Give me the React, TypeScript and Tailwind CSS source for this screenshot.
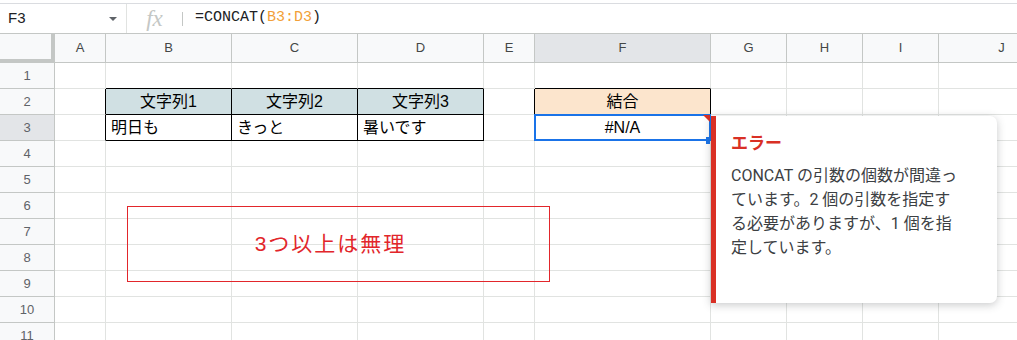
import React from 'react'

const COLS = [
    { id: 'A', w: 'w-[51px]' },
    { id: 'B', w: 'w-[126px]' },
    { id: 'C', w: 'w-[126px]' },
    { id: 'D', w: 'w-[126px]' },
    { id: 'E', w: 'w-[51px]' },
    { id: 'F', w: 'w-[176px]' },
    { id: 'G', w: 'w-[76px]' },
    { id: 'H', w: 'w-[76px]' },
    { id: 'I', w: 'w-[76px]' },
    { id: 'J', w: 'w-[126px]' },
]

const ROWS = [1, 2, 3, 4, 5, 6, 7, 8, 9, 10, 11]

// per-cell content and border overrides (table B2:D3 and F2:F3 have black borders)
const CELLS: Record<string, { text?: string; cls?: string }> = {
    A2: { cls: 'border-r-black' },
    A3: { cls: 'border-r-black' },
    B1: { cls: 'border-b-black' },
    C1: { cls: 'border-b-black' },
    D1: { cls: 'border-b-black' },
    F1: { cls: 'border-b-black' },
    E2: { cls: 'border-r-black' },
    E3: { cls: 'border-r-black' },
    B2: { text: '文字列1', cls: 'border-r-black border-b-black bg-[#d0e0e3] justify-center' },
    C2: { text: '文字列2', cls: 'border-r-black border-b-black bg-[#d0e0e3] justify-center' },
    D2: { text: '文字列3', cls: 'border-r-black border-b-black bg-[#d0e0e3] justify-center' },
    B3: { text: '明日も', cls: 'border-r-black border-b-black pl-[5px]' },
    C3: { text: 'きっと', cls: 'border-r-black border-b-black pl-[5px]' },
    D3: { text: '暑いです', cls: 'border-r-black border-b-black pl-[5px]' },
    F2: { text: '結合', cls: 'border-r-black border-b-black bg-[#fce5cd] justify-center' },
    F3: { text: '#N/A', cls: 'border-r-black border-b-black justify-center' },
}

function FormulaBar() {
    return (
        <div className="h-[30px] border-b border-[#c4c7c5] flex items-center">
            <div className="w-[127px] h-full flex items-center justify-between border-r border-[#e1e3e1] pl-[8px] pr-[9px]">
                <span className="text-[15px] text-[#202124]">F3</span>
                <span className="w-0 h-0 border-l-[4px] border-r-[4px] border-t-[4px] border-l-transparent border-r-transparent border-t-[#5f6368] mt-[1px]" />
            </div>
            <div className="w-[55px] flex justify-center">
                <span className="text-[23px] italic text-[#c4c7c5] leading-none" style={{ fontFamily: '"Liberation Serif", serif' }}>
                    fx
                </span>
            </div>
            <div className="w-px h-[14px] bg-[#c4c7c5]" />
            <div className="ml-[12px] text-[15px] text-[#202124]" style={{ fontFamily: '"Liberation Mono", monospace' }}>
                =CONCAT(<span className="text-[#f29f38]">B3:D3</span>)
            </div>
        </div>
    )
}

function HeaderRow() {
    return (
        <div className="flex h-[29px]">
            <div className="w-[55px] shrink-0 bg-[#f8f9fa] border-r-4 border-b-4 border-[#c4c7c5]" />
            {COLS.map((c) => (
                <div
                    key={c.id}
                    className={`${c.w} shrink-0 flex items-center justify-center border-r border-b border-[#c4c7c5] text-[13px] text-[#444746] ${c.id === 'F' ? 'bg-[#e3e5e8]' : 'bg-[#f8f9fa]'}`}
                >
                    {c.id}
                </div>
            ))}
        </div>
    )
}

function Row({ n }: { n: number }) {
    return (
        <div className="flex h-[26px]">
            <div
                className={`w-[55px] shrink-0 flex items-center justify-center border-r border-b border-[#c4c7c5] text-[13px] text-[#5f6368] ${n === 3 ? 'bg-[#e3e5e8]' : 'bg-[#f8f9fa]'}`}
            >
                {n}
            </div>
            {COLS.map((c) => {
                const key = `${c.id}${n}`
                const cell = CELLS[key]
                return (
                    <div
                        key={key}
                        className={`${c.w} shrink-0 relative flex items-center border-r border-b border-[#e1e3e1] text-[16px] text-black ${cell?.cls ?? ''}`}
                    >
                        {cell?.text}
                        {key === 'F3' && (
                            <>
                                <div className="absolute left-[-1px] top-[-1px] right-[-1px] bottom-[-1px] border-2 border-[#1a73e8]" />
                                <div className="absolute top-0 right-0 w-0 h-0 border-t-[7px] border-l-[7px] border-t-[#d93025] border-l-transparent" />
                                <div className="absolute right-[-2px] bottom-[-4px] w-[6px] h-[7px] bg-[#1a73e8]" />
                            </>
                        )}
                    </div>
                )
            })}
        </div>
    )
}

export default function App() {
    return (
        <div
            className="w-[1017px] h-[340px] overflow-hidden bg-white relative"
            style={{ fontFamily: '"Liberation Sans", "Noto Sans CJK JP", sans-serif' }}
        >
            <div className="pt-[3px]">
                <div className="border-t border-[#dadce0]">
                    <FormulaBar />
                </div>
            </div>
            <HeaderRow />
            {ROWS.map((n) => (
                <Row key={n} n={n} />
            ))}

            {/* floating text box drawn on the sheet */}
            <div className="absolute left-[127px] top-[206px] w-[423px] h-[76px] border border-[#e2262b] flex items-center justify-center">
                <span className="text-[21px] tracking-[2px] text-[#e2262b] mr-[16px]">3つ以上は無理</span>
            </div>

            {/* error tooltip */}
            <div
                className="absolute left-[711px] top-[116px] w-[286px] h-[187px] bg-white border-l-[5px] border-[#d93025] rounded-r-[7px] shadow-[0_2px_8px_rgba(60,64,67,0.28)] pl-[15px] pt-[16px]"
                style={{ fontFamily: 'Roboto, "Noto Sans CJK JP", sans-serif' }}
            >
                <div className="text-[17px] leading-[22px] font-bold text-[#d93025]">エラー</div>
                <div className="mt-[10px] text-[16px] leading-[24px] text-[#3c4043] whitespace-nowrap">
                    CONCAT の引数の個数が間違っ
                    <br />
                    ています。2 個の引数を指定す
                    <br />
                    る必要がありますが、1 個を指
                    <br />
                    定しています。
                </div>
            </div>
        </div>
    )
}
